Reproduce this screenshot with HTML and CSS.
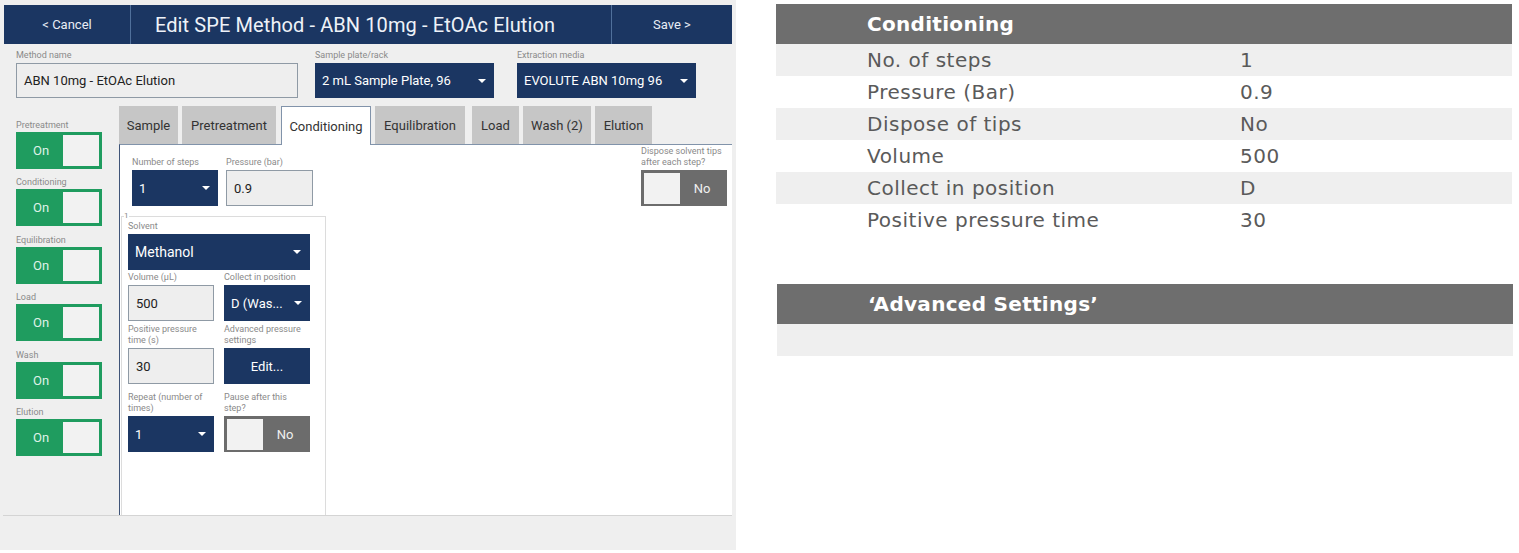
FILE: index.html
```html
<!DOCTYPE html>
<html>
<head>
<meta charset="utf-8">
<link rel="stylesheet" href="styles.css">
</head>
<body>
<div class="page">
  <div class="app">
    <header class="appbar">
      <div class="nav-btn cancel">&lt; Cancel</div>
      <div class="title">Edit SPE Method - ABN 10mg - EtOAc Elution</div>
      <div class="nav-btn save">Save &gt;</div>
    </header>

    <div class="meta-row">
      <div class="field w-name">
        <div class="lbl">Method name</div>
        <div class="input">ABN 10mg - EtOAc Elution</div>
      </div>
      <div class="field w-plate">
        <div class="lbl">Sample plate/rack</div>
        <div class="select">2 mL Sample Plate, 96<span class="caret"></span></div>
      </div>
      <div class="field w-media">
        <div class="lbl">Extraction media</div>
        <div class="select">EVOLUTE ABN 10mg 96<span class="caret"></span></div>
      </div>
    </div>

    <div class="main">
      <div class="toggles">
        <div class="tgl-field">
          <div class="lbl">Pretreatment</div>
          <div class="switch on"><span class="sw-text">On</span><span class="knob"></span></div>
        </div>
        <div class="tgl-field">
          <div class="lbl">Conditioning</div>
          <div class="switch on"><span class="sw-text">On</span><span class="knob"></span></div>
        </div>
        <div class="tgl-field">
          <div class="lbl">Equilibration</div>
          <div class="switch on"><span class="sw-text">On</span><span class="knob"></span></div>
        </div>
        <div class="tgl-field">
          <div class="lbl">Load</div>
          <div class="switch on"><span class="sw-text">On</span><span class="knob"></span></div>
        </div>
        <div class="tgl-field">
          <div class="lbl">Wash</div>
          <div class="switch on"><span class="sw-text">On</span><span class="knob"></span></div>
        </div>
        <div class="tgl-field">
          <div class="lbl">Elution</div>
          <div class="switch on"><span class="sw-text">On</span><span class="knob"></span></div>
        </div>
      </div>

      <div class="tabs-area">
        <div class="tabs">
          <div class="tab t-sample">Sample</div>
          <div class="tab t-pre">Pretreatment</div>
          <div class="tab active t-cond">Conditioning</div>
          <div class="tab t-equi">Equilibration</div>
          <div class="tab t-load">Load</div>
          <div class="tab t-wash">Wash (2)</div>
          <div class="tab t-elu">Elution</div>
        </div>
        <div class="panel">
          <div class="panel-top">
            <div class="group">
              <div class="field w86">
                <div class="lbl">Number of steps</div>
                <div class="select sm">1<span class="caret"></span></div>
              </div>
              <div class="field w87">
                <div class="lbl">Pressure (bar)</div>
                <div class="input sm">0.9</div>
              </div>
            </div>
            <div class="field w86">
              <div class="lbl">Dispose solvent tips<br>after each step?</div>
              <div class="switch off"><span class="knob"></span><span class="sw-text">No</span></div>
            </div>
          </div>

          <div class="step">
            <span class="step-no">1</span>
            <div class="field">
              <div class="lbl">Solvent</div>
              <div class="select solvent">Methanol<span class="caret"></span></div>
            </div>
            <div class="grid r1">
              <div class="field">
                <div class="lbl">Volume (µL)</div>
                <div class="input sm">500</div>
              </div>
              <div class="field">
                <div class="lbl">Collect in position</div>
                <div class="select sm">D (Was...<span class="caret"></span></div>
              </div>
            </div>
            <div class="grid r2">
              <div class="field">
                <div class="lbl">Positive pressure<br>time (s)</div>
                <div class="input sm">30</div>
              </div>
              <div class="field">
                <div class="lbl">Advanced pressure<br>settings</div>
                <div class="button">Edit...</div>
              </div>
            </div>
            <div class="grid r3">
              <div class="field">
                <div class="lbl">Repeat (number of<br>times)</div>
                <div class="select sm">1<span class="caret"></span></div>
              </div>
              <div class="field">
                <div class="lbl">Pause after this<br>step?</div>
                <div class="switch off"><span class="knob"></span><span class="sw-text">No</span></div>
              </div>
            </div>
          </div>
        </div>
      </div>
    </div>
    <div class="footer"></div>
  </div>

  <div class="summary">
    <div class="sum-table">
      <div class="sum-head">Conditioning</div>
      <div class="sum-row alt"><span class="k">No. of steps</span><span class="v">1</span></div>
      <div class="sum-row"><span class="k">Pressure (Bar)</span><span class="v">0.9</span></div>
      <div class="sum-row alt"><span class="k">Dispose of tips</span><span class="v">No</span></div>
      <div class="sum-row"><span class="k">Volume</span><span class="v">500</span></div>
      <div class="sum-row alt"><span class="k">Collect in position</span><span class="v">D</span></div>
      <div class="sum-row"><span class="k">Positive pressure time</span><span class="v">30</span></div>
    </div>
    <div class="sum-table adv">
      <div class="sum-head">‘Advanced Settings’</div>
      <div class="sum-row alt"><span class="k"></span><span class="v"></span></div>
    </div>
  </div>
</div>
</body>
</html>
```

FILE: styles.css
```css
* { box-sizing: border-box; }
html, body { margin: 0; padding: 0; background: #ffffff; }

.page {
  display: flex;
  align-items: flex-start;
  width: 1519px;
  height: 553px;
  overflow: hidden;
}

/* ---------- left app ---------- */
.app {
  width: 736px;
  height: 550px;
  background: #efefef;
  padding: 5px 4px 0 3px;
  display: flex;
  flex-direction: column;
  font-family: Roboto, "Liberation Sans", sans-serif;
  color: #2a2a2a;
}

.appbar {
  height: 39px;
  margin-left: 1px;
  background: #1b3662;
  display: flex;
  align-items: center;
  color: #ffffff;
}
.nav-btn {
  height: 100%;
  display: flex;
  align-items: center;
  justify-content: center;
  font-size: 13px;
  color: #e8edf5;
}
.cancel { width: 127px; border-right: 1px solid #50709b; }
.save { width: 121px; border-left: 1px solid #50709b; }
.title {
  flex: 1;
  text-align: center;
  padding-right: 32px;
  font-size: 20px;
  color: #eef2f8;
  letter-spacing: 0.1px;
}

.lbl {
  font-size: 9px;
  line-height: 11px;
  color: #8a8a8a;
  white-space: nowrap;
}

.field { display: flex; flex-direction: column; }
.field .lbl { margin-bottom: 2px; }

.meta-row {
  display: flex;
  padding: 6px 0 0 13px;
}
.w-name { width: 282px; margin-right: 17px; }
.w-plate { width: 179px; margin-right: 23px; }
.w-media { width: 179px; }
.w86 { width: 86px; }
.w87 { width: 87px; }

.input {
  height: 35px;
  background: #eeeeee;
  border: 1.5px solid #8f9aa5;
  display: flex;
  align-items: center;
  padding-left: 7px;
  font-size: 13px;
  color: #222;
}
.select {
  height: 35px;
  background: #1b3662;
  display: flex;
  align-items: center;
  padding: 0 8px 0 7px;
  font-size: 13px;
  color: #ffffff;
  position: relative;
}
.select .caret {
  margin-left: auto;
  width: 0;
  height: 0;
  border-left: 4px solid transparent;
  border-right: 4px solid transparent;
  border-top: 4px solid #ffffff;
}
.sm { height: 36px; }
.select.sm { padding-left: 7px; }
.solvent { height: 36px; font-size: 14px; padding-right: 9px; }

.button {
  height: 36px;
  background: #1b3662;
  color: #ffffff;
  display: flex;
  align-items: center;
  justify-content: center;
  font-size: 13px;
}

/* ---------- main ---------- */
.main {
  display: flex;
  margin-top: 8px;
  height: 409px;
}

.toggles {
  width: 86px;
  margin-left: 13px;
  margin-right: 17px;
  padding-top: 14px;
  display: flex;
  flex-direction: column;
  gap: 8.4px;
}
.tgl-field .lbl { margin-bottom: 1px; }

.switch {
  height: 37px;
  display: flex;
  align-items: center;
  padding: 3px;
}
.switch .knob {
  width: 36px;
  height: 31px;
  background: #f2f2f2;
}
.switch .sw-text {
  flex: 1;
  text-align: center;
  font-size: 13px;
}
.switch.on { background: #1f9c5f; }
.switch.on .sw-text { color: #dff2e7; }
.switch.off { background: #6c6c6c; height: 36px; }
.switch.off .sw-text { color: #f0f0f0; }

.tabs-area {
  width: 613px;
  display: flex;
  flex-direction: column;
}
.tabs {
  display: flex;
  gap: 4px;
  height: 38px;
  position: relative;
  z-index: 1;
}
.tab {
  height: 38px;
  background: #c6c6c6;
  display: flex;
  align-items: center;
  justify-content: center;
  font-size: 13px;
  color: #333;
}
.tab.active {
  background: #ffffff;
  height: 39px;
  border: 1px solid #8193aa;
  border-bottom: none;
}
.t-sample { width: 59px; }
.t-pre { width: 94px; }
.t-cond { width: 90px; margin-left: 1px; }
.t-equi { width: 90px; }
.t-load { width: 47px; margin-left: 3px; }
.t-wash { width: 68px; }
.t-elu { width: 57px; }

.panel {
  flex: 1;
  background: #ffffff;
  border-top: 1px solid #8193aa;
  border-left: 1px solid #3f5478;
  display: flex;
  flex-direction: column;
}
.panel-top {
  display: flex;
  justify-content: space-between;
  align-items: flex-end;
  padding: 1px 5px 0 12px;
}
.group { display: flex; gap: 8px; }

.step {
  position: relative;
  flex: 1;
  width: 205px;
  margin: 10px 0 0 1px;
  border: 1px solid #dcdcdc;
  border-bottom: none;
  padding: 4px 0 0 6px;
}
.step-no {
  position: absolute;
  left: 2px;
  top: -5px;
  font-size: 8px;
  line-height: 8px;
  color: #888;
  background: #ffffff;
}
.step .solvent { width: 182px; }

.grid {
  display: grid;
  grid-template-columns: 86px 86px;
  column-gap: 10px;
}
.r1 { margin-top: 2px; }
.r2 { margin-top: 3px; }
.r3 { margin-top: 8px; }

.footer {
  height: 34px;
  margin-left: 0;
  border-top: 1px solid #d4d4d4;
}

/* ---------- summary ---------- */
.summary {
  width: 737px;
  margin-left: 40px;
  padding-top: 4px;
  font-family: "DejaVu Sans", Verdana, sans-serif;
}
.sum-table { width: 736px; }
.sum-table.adv { margin-top: 48px; margin-left: 1px; }
.sum-head {
  height: 40px;
  background: #6e6e6e;
  color: #ffffff;
  font-weight: bold;
  font-size: 20px;
  letter-spacing: 0.3px;
  display: flex;
  align-items: center;
  padding-left: 91px;
}
.sum-row {
  height: 32px;
  display: flex;
  align-items: center;
  font-size: 20px;
  letter-spacing: 0.5px;
  color: #5a5a5a;
  background: #ffffff;
}
.sum-row.alt { background: #efefef; }
.sum-row .k { width: 464px; padding-left: 91px; }
.sum-row .v { flex: 1; }
```
